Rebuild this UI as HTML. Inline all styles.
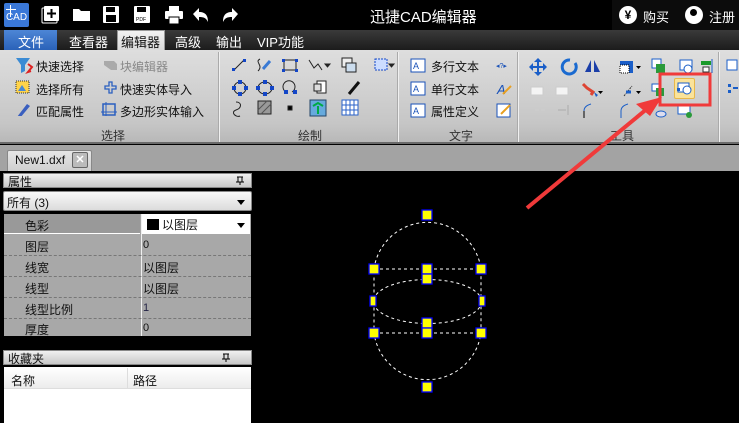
<!DOCTYPE html>
<html><head><meta charset="utf-8">
<style>
*{margin:0;padding:0;box-sizing:border-box}
body{width:739px;height:423px;overflow:hidden;background:#000;font-family:"Liberation Sans","Noto Sans CJK SC",sans-serif;position:relative}
.a{position:absolute}
.t{position:absolute;font-size:12px;color:#111;white-space:nowrap}
.ic{position:absolute;width:16px;height:16px}
</style></head><body>
<!-- title bar -->
<div class="a" style="left:0;top:0;width:739px;height:30px;background:#000"></div>
<div class="a" style="left:612px;top:0;width:127px;height:30px;background:#0c0c0c"></div>
<div class="a" style="left:4px;top:3px;width:25px;height:24px;background:#3a78d8;border-radius:2px;color:#fff;font-size:10px;line-height:30px;text-align:center">CAD<div class="a" style="left:6px;top:2px;width:1px;height:12px;background:#fff"></div><div class="a" style="left:2px;top:6px;width:10px;height:1px;background:#fff"></div></div>
<svg class="a" style="left:40px;top:3px" width="210" height="24" viewBox="0 0 210 24" fill="#fff">
<rect x="4" y="3" width="15" height="15" rx="1"/><rect x="2" y="5" width="15" height="15" rx="1" fill="none" stroke="#fff" stroke-width="1"/><path d="M11.5 6v9M7 10.5h9" stroke="#000" stroke-width="2"/>
<path d="M33 6h6l2 2h9v10H33z"/>
<rect x="63" y="3" width="16" height="17" rx="1"/><rect x="66" y="4" width="9" height="5" fill="#000"/><rect x="66" y="12" width="10" height="7" fill="#000"/>
<rect x="94" y="3" width="16" height="17" rx="1"/><rect x="97" y="4" width="9" height="5" fill="#000"/><text x="96" y="18" font-size="5" fill="#000">PDF</text>
<rect x="125" y="8" width="18" height="8" rx="1"/><rect x="129" y="3" width="10" height="5"/><rect x="129" y="14" width="10" height="7" stroke="#000"/>
<path d="M153 11l6-6v4c7 0 9 4 9 10-2-4-4-5-9-5v4z"/>
<path d="M198 11l-6-6v4c-7 0-9 4-9 10 2-4 4-5 9-5v4z"/>
</svg>
<div class="t" style="left:370px;top:6px;font-size:15px;color:#fff">迅捷CAD编辑器</div>
<div class="a" style="left:619px;top:6px;width:18px;height:18px;border-radius:50%;background:#fff;color:#000;font-size:12px;font-weight:bold;text-align:center;line-height:18px">¥</div>
<div class="t" style="left:643px;top:7px;font-size:13px;color:#fff">购买</div>
<div class="a" style="left:685px;top:6px;width:18px;height:18px;border-radius:50%;background:#fff"></div>
<div class="a" style="left:690px;top:9px;width:7px;height:7px;border-radius:50%;background:#000"></div>
<div class="t" style="left:709px;top:7px;font-size:13px;color:#fff">注册</div>
<!-- tabs row -->
<div class="a" style="left:0;top:30px;width:739px;height:20px;background:linear-gradient(#3a3a3a,#1c1c1c)"></div>
<div class="a" style="left:4px;top:30px;width:53px;height:20px;background:linear-gradient(#4d86d6,#2a62b8)"></div>
<div class="t" style="left:18px;top:32px;color:#fff;font-size:13px">文件</div>
<div class="t" style="left:69px;top:32px;color:#fff;font-size:13px">查看器</div>
<div class="a" style="left:117px;top:30px;width:48px;height:21px;background:linear-gradient(#f2f2f2,#d8d8d8);border:1px solid #999;border-bottom:none"></div>
<div class="t" style="left:121px;top:32px;font-size:13px">编辑器</div>
<div class="t" style="left:175px;top:32px;color:#fff;font-size:13px">高级</div>
<div class="t" style="left:216px;top:32px;color:#fff;font-size:13px">输出</div>
<div class="t" style="left:257px;top:32px;color:#fff;font-size:13px">VIP功能</div>
<!-- ribbon -->
<div class="a" style="left:0;top:50px;width:739px;height:94px;background:linear-gradient(#dedede,#c6c6c6 80%,#b8b8b8);border-bottom:2px solid #6a6a6a"></div>
<div class="a" style="left:218px;top:52px;width:2px;height:90px;background:#f0f0f0;border-left:1px solid #aaa"></div>
<div class="a" style="left:397px;top:52px;width:2px;height:90px;background:#f0f0f0;border-left:1px solid #aaa"></div>
<div class="a" style="left:517px;top:52px;width:2px;height:90px;background:#f0f0f0;border-left:1px solid #aaa"></div>
<div class="a" style="left:718px;top:52px;width:2px;height:90px;background:#f0f0f0;border-left:1px solid #aaa"></div>
<!-- select group -->
<svg class="a" style="left:14px;top:56px" width="200" height="60">
<path d="M2 2h14l-5 7v6l-4 2v-8z" fill="#3b8bd4"/><path d="M14 8l4 3-4 5 3-1" stroke="#d22" stroke-width="2" fill="none"/>
<rect x="2" y="25" width="13" height="12" fill="#ffd34a" stroke="#333" stroke-dasharray="1 1"/><path d="M4 35l4-6 4 6z" fill="#4a8ad4"/>
<path d="M3 61l10-13 3 2-10 12z" fill="#3a5fbf"/>
<path d="M90 5h10l3 3v6h-6l-7-5z" fill="#aaa"/>
<path d="M91 30h4v-4h3v4h4v3h-4v4h-3v-4h-4z" fill="none" stroke="#2a5fc0" stroke-width="1.3"/>
<rect x="89" y="48" width="12" height="11" fill="none" stroke="#2a5fc0" stroke-width="1.5"/><path d="M92 46v16M87 56h16" stroke="#2a5fc0"/>
</svg>
<div class="t" style="left:36px;top:58px">快速选择</div>
<div class="t" style="left:120px;top:58px;color:#888">块编辑器</div>
<div class="t" style="left:36px;top:81px">选择所有</div>
<div class="t" style="left:120px;top:81px">快速实体导入</div>
<div class="t" style="left:36px;top:103px">匹配属性</div>
<div class="t" style="left:120px;top:103px">多边形实体输入</div>
<div class="t" style="left:101px;top:127px;color:#333">选择</div>
<!-- draw group -->
<svg class="a" style="left:230px;top:56px" width="165" height="64" fill="none" stroke="#222">
<path d="M4 14l10-10"/><rect x="2" y="12" width="3" height="3" fill="#1346c7" stroke="none"/><rect x="13" y="3" width="3" height="3" fill="#1346c7" stroke="none"/>
<path d="M30 3c-6 3 4 6-2 12"/><path d="M33 13l7-8" stroke="#3a7ad4" stroke-width="3"/>
<rect x="54" y="4" width="12" height="10"/><g fill="#1346c7" stroke="none"><rect x="52" y="3" width="3" height="3"/><rect x="65" y="3" width="3" height="3"/><rect x="52" y="13" width="3" height="3"/><rect x="65" y="13" width="3" height="3"/></g>
<path d="M79 4l5 8 4-4 4 6"/><path d="M95 8h5l-2.5 3z" fill="#222"/>
<rect x="112" y="2" width="10" height="9" fill="#eee"/><rect x="116" y="7" width="10" height="9" fill="#cde"/>
<rect x="145" y="3" width="12" height="11" stroke="#1346c7" stroke-dasharray="2 1" fill="#cdf"/><path d="M159 8h5l-2.5 3z" fill="#222"/>
<circle cx="10" cy="32" r="6"/><g fill="#1346c7" stroke="none"><rect x="8" y="24" width="4" height="4"/><rect x="8" y="36" width="4" height="4"/><rect x="2" y="30" width="4" height="4"/><rect x="14" y="30" width="4" height="4"/></g>
<ellipse cx="35" cy="32" rx="7" ry="6"/><g fill="#1346c7" stroke="none"><rect x="33" y="24" width="4" height="4"/><rect x="33" y="36" width="4" height="4"/><rect x="26" y="30" width="4" height="4"/><rect x="40" y="30" width="4" height="4"/></g>
<path d="M56 36a6 6 0 1 1 6 0"/><g fill="#1346c7" stroke="none"><rect x="54" y="34" width="4" height="4"/><rect x="63" y="34" width="4" height="4"/></g>
<rect x="87" y="25" width="9" height="12" fill="#fff"/><rect x="84" y="28" width="7" height="7" fill="#ddd"/>
<path d="M119 38l10-12" stroke="#111" stroke-width="3"/>
<path d="M6 46c6 0 6 6 0 8s0 8 4 6"/>
<rect x="28" y="45" width="13" height="13" fill="#999"/><path d="M28 54l9-9M31 58l10-10" stroke="#555"/>
<rect x="58" y="50" width="4" height="4" fill="#000"/>
<rect x="80" y="44" width="16" height="16" fill="#6ad" stroke="#246"/><path d="M88 58v-8M83 50l5-3 5 3" stroke="#0a4" stroke-width="2"/>
<rect x="112" y="44" width="16" height="15" fill="#fff" stroke="#2a62c8"/><path d="M112 49h16M112 54h16M116 44v15M120 44v15M124 44v15" stroke="#2a62c8"/>
</svg>
<div class="t" style="left:298px;top:127px;color:#333">绘制</div>
<!-- text group -->
<svg class="a" style="left:410px;top:58px" width="30" height="60">
<rect x="1" y="1" width="14" height="13" fill="#fff" stroke="#1a52b8"/><text x="3" y="11" font-size="9" fill="#1a52b8">A</text>
<rect x="1" y="24" width="14" height="13" fill="#fff" stroke="#1a52b8"/><text x="3" y="34" font-size="9" fill="#1a52b8">A</text>
<rect x="1" y="46" width="14" height="13" fill="#fff" stroke="#1a52b8"/><text x="3" y="56" font-size="9" fill="#1a52b8">A</text>
</svg>
<div class="t" style="left:431px;top:58px">多行文本</div>
<div class="t" style="left:431px;top:81px">单行文本</div>
<div class="t" style="left:431px;top:103px">属性定义</div>
<div class="t" style="left:449px;top:127px;color:#333">文字</div>
<svg class="a" style="left:495px;top:58px" width="20" height="60">
<text x="1" y="10" font-size="7" fill="#1a52b8">◂?▸</text>
<text x="2" y="36" font-size="13" fill="#1a52b8" font-style="italic">A</text><path d="M8 36l8-8" stroke="#e8a020" stroke-width="2"/>
<rect x="2" y="46" width="13" height="13" fill="#fff" stroke="#1a52b8"/><path d="M6 56l9-9" stroke="#e8a020" stroke-width="2"/>
</svg>
<!-- tools group -->
<svg class="a" style="left:528px;top:56px" width="190" height="64">
<path d="M10 2l4 4h-3v4h4v-3l4 4-4 4v-3h-4v4h3l-4 4-4-4h3v-4H5v3l-4-4 4-4v3h4V6H6z" fill="#1a5ec8"/>
<path d="M42 4a7 7 0 1 0 5 3" stroke="#1a6ad0" stroke-width="3" fill="none"/>
<path d="M57 16l6-12v12zM66 16V4l6 12z" fill="#1a3ea8"/>
<rect x="92" y="5" width="13" height="12" fill="#1a5ec8"/><rect x="92" y="9" width="9" height="8" fill="#fff" stroke="#000" stroke-dasharray="1 1"/><path d="M108 10h5l-2.5 3z"/>
<rect x="124" y="3" width="9" height="9" fill="#fff" stroke="#1a5ec8"/><rect x="128" y="8" width="9" height="9" fill="#2a9a3a"/>
<rect x="152" y="4" width="12" height="10" fill="#fff" stroke="#1a5ec8"/><circle cx="160" cy="13" r="4" fill="#fff" stroke="#1a5ec8"/>
<rect x="173" y="5" width="10" height="4" fill="#1a9a2a"/><rect x="175" y="11" width="6" height="5" fill="#fff" stroke="#333"/><path d="M184 3v14" stroke="#1a5ec8"/>
<rect x="3" y="31" width="12" height="8" fill="#f4f4f4" stroke="#ccc"/><rect x="28" y="31" width="12" height="8" fill="#f4f4f4" stroke="#ccc"/>
<path d="M55 28l4 4 6 4-2 3" stroke="#d43" stroke-width="3" fill="none"/><path d="M66 36l4 3-2 2z" fill="#1a5ec8"/><path d="M70 35h5l-2.5 3z"/>
<path d="M96 40l8-10" stroke="#333" stroke-dasharray="2 1"/><path d="M98 36h5" stroke="#1a5ec8" stroke-width="3"/><path d="M108 35h5l-2.5 3z"/>
<rect x="124" y="28" width="7" height="7" fill="#fff" stroke="#1a5ec8"/><rect x="128" y="32" width="8" height="8" fill="#2a9a3a"/>
<path d="M7 54h4M13 54h4" stroke="#ccc" stroke-width="2"/><path d="M30 54h8M40 49v10" stroke="#bbb" stroke-width="2"/>
<path d="M56 62V55q0-5 7-7" stroke="#1a5ec8" fill="none"/><path d="M56 62V55" stroke="#000"/>
<path d="M93 62V55q0-5 7-7" stroke="#1a5ec8" fill="none"/>
<ellipse cx="133" cy="58" rx="5" ry="3" fill="#dde" stroke="#1a5ec8"/>
<rect x="150" y="49" width="12" height="9" fill="#fff" stroke="#1a5ec8"/><circle cx="161" cy="59" r="3" fill="#2a9a3a"/>
</svg>
<div class="a" style="left:674px;top:78px;width:21px;height:21px;background:#fbe39a;border:1px solid #e8b84a;border-radius:2px"></div>
<svg class="a" style="left:677px;top:81px" width="16" height="16"><rect x="1" y="2" width="11" height="9" fill="#fff" stroke="#1a5ec8"/><circle cx="10" cy="9" r="4" fill="#fff" stroke="#1a5ec8"/><rect x="0" y="7" width="3" height="3" fill="#1a5ec8"/></svg>
<div class="t" style="left:610px;top:127px;color:#333">工具</div>
<svg class="a" style="left:726px;top:56px" width="13" height="60"><rect x="1" y="4" width="10" height="10" fill="#fff" stroke="#1a5ec8"/><g fill="#1a5ec8"><rect x="2" y="28" width="3" height="3"/><rect x="2" y="34" width="3" height="3"/><rect x="7" y="31" width="5" height="2"/></g></svg>
<!-- doc tab strip -->
<div class="a" style="left:0;top:145px;width:739px;height:26px;background:#a3a3a3"></div>
<div class="a" style="left:7px;top:150px;width:85px;height:21px;background:linear-gradient(#e6e6e6,#cfcfcf);border:1px solid #888;border-bottom:none;border-radius:2px 2px 0 0"></div>
<div class="t" style="left:15px;top:153px;font-size:12px">New1.dxf</div>
<div class="a" style="left:72px;top:152px;width:16px;height:16px;background:#bbb;border:1px solid #666;border-radius:2px;color:#fff;font-size:11px;text-align:center;line-height:14px;font-weight:bold">✕</div>
<!-- left panel -->
<div class="a" style="left:0;top:171px;width:256px;height:252px;background:#000"></div>
<div class="a" style="left:3px;top:173px;width:249px;height:15px;background:linear-gradient(#f0f0f0,#c8c8c8);border:1px solid #888"></div>
<div class="t" style="left:8px;top:173px;font-size:12px">属性</div>
<svg class="a" style="left:236px;top:176px" width="8" height="9"><path d="M1 1h6M2 1v5h4V1M0 6h8M4 6v3" stroke="#000" fill="none"/></svg>
<div class="a" style="left:3px;top:191px;width:249px;height:20px;background:linear-gradient(#f8f8f8,#dcdcdc);border:1px solid #888;border-radius:2px"></div>
<div class="t" style="left:7px;top:194px;font-size:12px">所有 (3)</div>
<div class="a" style="left:237px;top:200px;border:4px solid transparent;border-top:5px solid #000"></div>
<div class="a" style="left:4px;top:214px;width:247px;height:122px;background:#a8a8a8"></div>
<div class="a" style="left:4px;top:214px;width:136px;height:20px;background:#999;border-bottom:1px solid #fff"></div>
<div class="a" style="left:141px;top:214px;width:1px;height:122px;background:#f0f0f0"></div>
<div class="a" style="left:142px;top:214px;width:108px;height:20px;background:#fff"></div>
<div class="a" style="left:147px;top:219px;width:12px;height:11px;background:#000"></div>
<div class="t" style="left:162px;top:216px">以图层</div>
<div class="a" style="left:237px;top:223px;border:4px solid transparent;border-top:5px solid #000"></div>
<div class="a" style="left:4px;top:255px;width:247px;border-top:1px dashed #777"></div>
<div class="a" style="left:4px;top:276px;width:247px;border-top:1px dashed #777"></div>
<div class="a" style="left:4px;top:297px;width:247px;border-top:1px dashed #777"></div>
<div class="a" style="left:4px;top:318px;width:247px;border-top:1px dashed #777"></div>
<div class="t" style="left:25px;top:217px">色彩</div>
<div class="t" style="left:25px;top:238px">图层</div><div class="t" style="left:143px;top:239px;font-size:11px">0</div>
<div class="t" style="left:25px;top:259px">线宽</div><div class="t" style="left:143px;top:259px">以图层</div>
<div class="t" style="left:25px;top:280px">线型</div><div class="t" style="left:143px;top:280px">以图层</div>
<div class="t" style="left:25px;top:301px">线型比例</div><div class="t" style="left:143px;top:302px;font-size:11px;color:#224">1</div>
<div class="t" style="left:25px;top:321px">厚度</div><div class="t" style="left:143px;top:322px;font-size:11px">0</div>
<div class="a" style="left:3px;top:350px;width:249px;height:15px;background:linear-gradient(#f0f0f0,#c8c8c8);border:1px solid #888"></div>
<div class="t" style="left:8px;top:350px">收藏夹</div>
<svg class="a" style="left:222px;top:353px" width="8" height="9"><path d="M1 1h6M2 1v5h4V1M0 6h8M4 6v3" stroke="#000" fill="none"/></svg>
<div class="a" style="left:4px;top:367px;width:247px;height:56px;background:#fff"></div>
<div class="a" style="left:4px;top:367px;width:247px;height:22px;background:linear-gradient(#fff,#ececec);border-bottom:1px solid #ddd"></div>
<div class="a" style="left:127px;top:368px;width:1px;height:21px;background:#ddd"></div>
<div class="t" style="left:11px;top:372px">名称</div>
<div class="t" style="left:133px;top:372px">路径</div>
<!-- canvas drawing -->
<svg class="a" style="left:256px;top:171px" width="483" height="252">
<g fill="none" stroke="#fff" stroke-width="1" stroke-dasharray="3 3" transform="translate(-256,-171)">
<path d="M374 269A54 54 0 0 1 481 269V333A54 54 0 0 1 374 333Z"/>
<ellipse cx="427.5" cy="301.5" rx="54" ry="22"/>
<path d="M374 269H481M374 333H481"/>
</g>
<g fill="#ff0" stroke="#00f" stroke-width="1.3" transform="translate(-256,-171)">
<rect x="422" y="210" width="10" height="10"/>
<rect x="369" y="264" width="10" height="10"/><rect x="422" y="264" width="10" height="10"/><rect x="476" y="264" width="10" height="10"/>
<rect x="422" y="274" width="10" height="10"/>
<rect x="370" y="296" width="6" height="10"/><rect x="479" y="296" width="6" height="10"/>
<rect x="422" y="318" width="10" height="10"/>
<rect x="369" y="328" width="10" height="10"/><rect x="422" y="328" width="10" height="10"/><rect x="476" y="328" width="10" height="10"/>
<rect x="422" y="382" width="10" height="10"/>
</g>
</svg>
<!-- annotation -->
<svg class="a" style="left:0;top:0" width="739" height="423">
<rect x="660" y="74" width="50" height="31" fill="none" stroke="#f03a3a" stroke-width="3"/>
<path d="M527 208L648 108" stroke="#f03a3a" stroke-width="4"/>
<path d="M662 97L636 104L650 116Z" fill="#f03a3a"/>
</svg>
</body></html>
